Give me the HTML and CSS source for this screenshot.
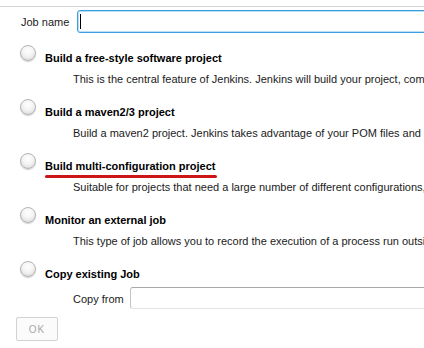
FILE: index.html
```html
<!DOCTYPE html>
<html lang="en">
<head>
    <meta charset="UTF-8">
    <meta name="viewport" content="width=device-width, initial-scale=1.0">
    <title>New Item</title>
    <link rel="stylesheet" href="styles.css">
</head>
<body>
    <div class="page">
        <div class="name-row">
            <label for="jobName">Job name</label>
            <div class="name-field">
                <input type="text" id="jobName">
            </div>
        </div>

        <div class="options">
            <div class="option">
                <label class="choice"><span class="radio"></span><span class="title">Build a free-style software project</span></label>
                <div class="desc">This is the central feature of Jenkins. Jenkins will build your project, combining any SCM with any build system, and this can be even used for something other than software build.</div>
            </div>

            <div class="option">
                <label class="choice"><span class="radio"></span><span class="title">Build a maven2/3 project</span></label>
                <div class="desc">Build a maven2 project. Jenkins takes advantage of your POM files and drastically reduces the configuration.</div>
            </div>

            <div class="option">
                <label class="choice"><span class="radio"></span><span class="title marked">Build multi-configuration project</span></label>
                <div class="desc">Suitable for projects that need a large number of different configurations, such as testing on multiple environments, platform-specific builds, etc.</div>
            </div>

            <div class="option">
                <label class="choice"><span class="radio"></span><span class="title">Monitor an external job</span></label>
                <div class="desc">This type of job allows you to record the execution of a process run outside Jenkins, even on a remote machine.</div>
            </div>

            <div class="option">
                <label class="choice"><span class="radio"></span><span class="title">Copy existing Job</span></label>
                <div class="copy-row">
                    <label for="copyFrom">Copy from</label>
                    <input type="text" id="copyFrom">
                </div>
            </div>
        </div>

        <button class="ok-btn" disabled>OK</button>
    </div>
</body>
</html>
```

FILE: styles.css
```css
html, body {
    overflow: hidden;
}

body {
    margin: 0;
    padding: 0;
    font-family: 'Liberation Sans', Arial, sans-serif;
    font-size: 11px;
    color: #1a1a1a;
    background: #ffffff;
}

.page {
    padding-top: 6px;
}

.name-row {
    display: flex;
    align-items: center;
    border-top: 1px solid #d4d4d4;
    padding-top: 3px;
    padding-left: 21px;
    gap: 8px;
}

.name-row label {
    flex: none;
    line-height: 14px;
    white-space: nowrap;
}

.name-field {
    position: relative;
    flex: none;
}

.name-field input {
    display: block;
    width: 420px;
    height: 23px;
    box-sizing: border-box;
    margin: 0;
    padding: 0 3px;
    border: 1px solid #3c9ee2;
    border-radius: 3px;
    box-shadow: inset 0 0 0 1px #b9def6;
    outline: none;
    font: inherit;
}

/* text cursor of the focused field */
.name-field::after {
    content: '';
    position: absolute;
    left: 3px;
    top: 4px;
    width: 1px;
    height: 15px;
    background: #000;
}

.options {
    margin-top: 12px;
}

.option + .option {
    margin-top: 13px;
}

.choice {
    display: flex;
    align-items: flex-start;
    padding-left: 20px;
    gap: 9px;
}

.radio {
    flex: none;
    width: 16px;
    height: 16px;
    box-sizing: border-box;
    border-radius: 50%;
    border: 1px solid #b4b4b4;
    background: radial-gradient(circle at 50% 35%, #ffffff 0%, #f4f4f4 45%, #d2d2d2 100%);
    box-shadow: 0 1px 1px rgba(0, 0, 0, 0.18);
}

.title {
    margin-top: 6px;
    line-height: 14px;
    font-weight: bold;
    color: #000;
    white-space: nowrap;
}

.marked {
    position: relative;
}

/* red hand drawn underline */
.marked::after {
    content: '';
    position: absolute;
    left: 0;
    right: -1px;
    top: 16px;
    height: 3px;
    border-radius: 2px;
    background: #cc1517;
}

.desc {
    margin-top: 7px;
    padding-left: 73px;
    line-height: 14px;
    white-space: nowrap;
}

.copy-row {
    display: flex;
    align-items: center;
    margin-top: 6px;
    padding-left: 73px;
    gap: 6px;
}

.copy-row label {
    flex: none;
    line-height: 14px;
    padding-top: 2px;
    white-space: nowrap;
}

.copy-row input {
    flex: none;
    display: block;
    width: 400px;
    height: 22px;
    box-sizing: border-box;
    margin: 0;
    border: 1px solid #c4c4c4;
    border-top-color: #a8a8a8;
    border-bottom-color: #e2e2e2;
    border-radius: 3px;
    font: inherit;
}

.ok-btn {
    display: block;
    margin: 8px 0 0 16px;
    width: 42px;
    height: 24px;
    padding: 0;
    border: 1px solid #d2d2d2;
    border-radius: 2px;
    background: #fbfbfb;
    color: #a8a8a8;
    font-family: 'Liberation Sans', Arial, sans-serif;
    font-size: 10px;
    letter-spacing: 1px;
}
```
